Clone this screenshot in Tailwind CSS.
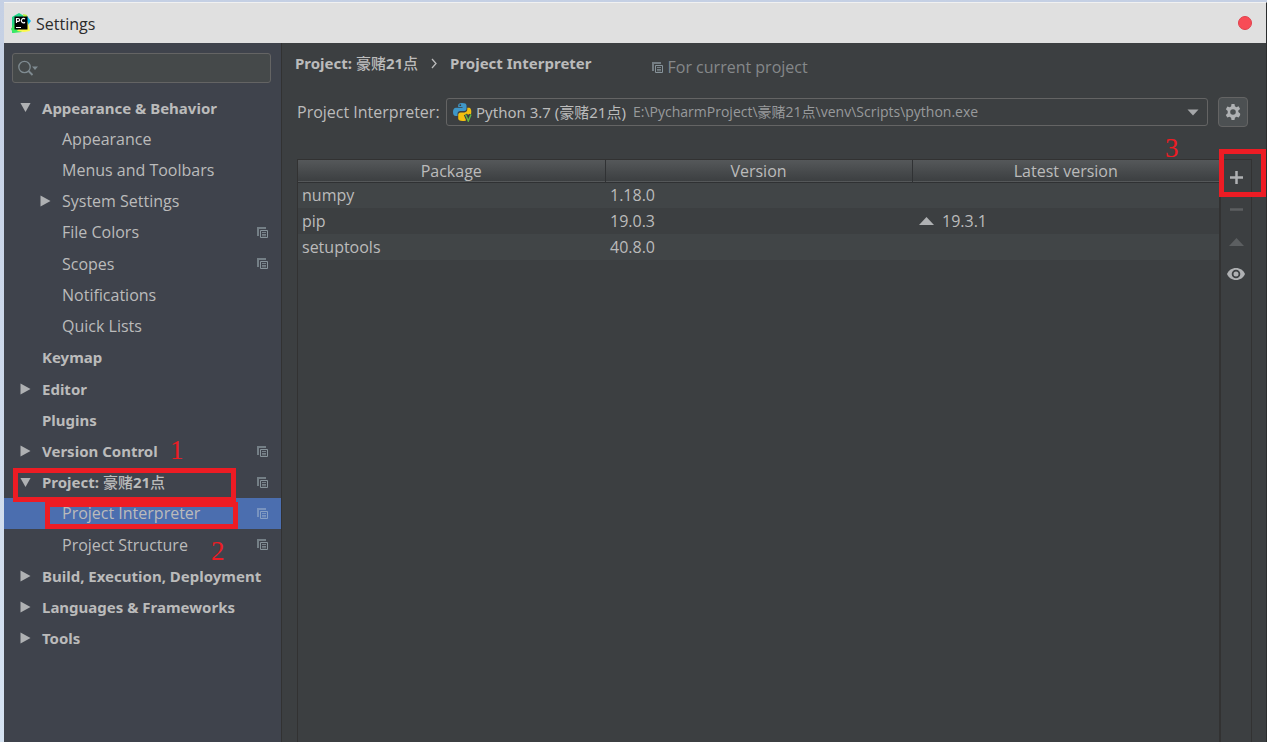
<!DOCTYPE html>
<html lang="en">
<head>
<meta charset="utf-8">
<meta name="viewport" content="width=device-width, initial-scale=1">
<title>Settings</title>
<script src="https://cdn.jsdelivr.net/npm/@tailwindcss/browser@4"></script>
</head>
<body class="flex min-h-screen flex-col bg-gradient-to-b from-[#c5d0e4] to-[#d6e3f2] pt-[2px] pl-1 font-['Open_Sans','Noto_Sans_CJK_SC',sans-serif] text-[16px] leading-5 text-[#bbbbbb]">

<svg class="hidden" aria-hidden="true">
  <symbol id="copy" viewBox="0 0 11 11">
    <path d="M0 0h9v2H2v7H0z" fill="currentColor" opacity=".75"/>
    <path d="M3.5 3.5h7v7h-7z" fill="none" stroke="currentColor"/>
    <path d="M5 5.5h4M5 7.5h4M5 8.8h4" stroke="currentColor" stroke-width=".8"/>
  </symbol>
  <symbol id="closed" viewBox="0 0 11 12"><path d="M0.500 0.500 10.500 6 0.500 11.500z" fill="currentColor"/></symbol>
  <symbol id="open" viewBox="0 0 12 11"><path d="M0.500 0.500h11L6 10.500z" fill="currentColor"/></symbol>
</svg>

<header class="flex h-[41px] shrink-0 items-center border-t border-r border-t-[#f1f1f1] border-r-[#2b2d2e] bg-[#e0e0e0] pr-[14px] pl-[7px] text-[#2b2b2b]">
  <svg class="mr-[5px] h-5 w-5" viewBox="0 0 20 20" aria-hidden="true">
    <path d="M1 4 8 0l5 3 1 14-4 1-9 2z" fill="#21d789"/>
    <path d="M0 16 4 9l7 10-9 1z" fill="#3bea62"/>
    <path d="M12 1l4 1 1 4-4 1z" fill="#b8ee3c"/>
    <path d="M16 3l4 5-3 4-3-6z" fill="#07c3f2"/>
    <path d="M15 6l2 4 2 8-6 1-7-1 3-4z" fill="#fcf84a"/>
    <path d="M3.500 3.500h13v13h-13z" fill="#000"/>
    <path d="M5.500 10V5.500h1.700a1.400 1.400 0 0 1 0 2.800H5.500M14 6a2.200 2.200 0 1 0 0 3.300M5 14.500h5" fill="none" stroke="#fff" stroke-width="1.200"/>
  </svg>
  <h1 class="grow pt-[2px]">Settings</h1>
  <button type="button" aria-label="Close" class="h-[14px] w-[14px] rounded-full border border-[#e0414c] bg-[#f84c56]"></button>
</header>

<div class="flex grow border-r border-[#2b2d2e] bg-[#3c3f41]">
  <aside class="w-[278px] shrink-0 border-r border-[#323232] bg-[#3f434c] pt-[10px]">
    <label class="mr-[10px] ml-2 flex h-[30px] items-center rounded-[3px] border border-[#646464] bg-[#45494a] pl-[5px] text-[#7f8b91]">
      <svg class="h-4 w-5" viewBox="0 0 20 16" fill="none" aria-hidden="true">
        <circle cx="6.500" cy="7" r="5.700" stroke="currentColor" stroke-width="1.300"/>
        <path d="m10.500 11 4 4" stroke="currentColor" stroke-width="1.800"/>
        <path d="M14 6.500h6l-3 3.500z" fill="currentColor"/>
      </svg>
      <input type="search" aria-label="Search settings" class="min-w-0 grow bg-transparent px-1 text-[#bbbbbb] outline-none">
    </label>

    <nav aria-label="Settings categories" class="mt-[9px]">
      <ul class="flex h-[562px] flex-col">
        <li class="flex flex-1 items-center pr-[13px] pl-4"><svg class="mr-[11px] h-[11px] w-[11px] text-[#afb1b3]"><use href="#open"/></svg><a href="#" class="font-['Noto_Sans','Noto_Sans_CJK_SC',sans-serif] text-[15px] font-bold">Appearance &amp; Behavior</a></li>
        <li class="flex flex-1 items-center pr-[13px] pl-[58px]"><a href="#">Appearance</a></li>
        <li class="flex flex-1 items-center pr-[13px] pl-[58px]"><a href="#">Menus and Toolbars</a></li>
        <li class="flex flex-1 items-center pr-[13px] pl-9"><svg class="mr-[11px] h-3 w-[11px] text-[#afb1b3]"><use href="#closed"/></svg><a href="#">System Settings</a></li>
        <li class="flex flex-1 items-center pr-[13px] pl-[58px]"><a href="#" class="grow">File Colors</a><svg class="h-[11px] w-[11px] text-[#87939a]"><use href="#copy"/></svg></li>
        <li class="flex flex-1 items-center pr-[13px] pl-[58px]"><a href="#" class="grow">Scopes</a><svg class="h-[11px] w-[11px] text-[#87939a]"><use href="#copy"/></svg></li>
        <li class="flex flex-1 items-center pr-[13px] pl-[58px]"><a href="#">Notifications</a></li>
        <li class="flex flex-1 items-center pr-[13px] pl-[58px]"><a href="#">Quick Lists</a></li>
        <li class="flex flex-1 items-center pr-[13px] pl-[38px]"><a href="#" class="font-['Noto_Sans','Noto_Sans_CJK_SC',sans-serif] text-[15px] font-bold">Keymap</a></li>
        <li class="flex flex-1 items-center pr-[13px] pl-4"><svg class="mr-[11px] h-3 w-[11px] text-[#afb1b3]"><use href="#closed"/></svg><a href="#" class="font-['Noto_Sans','Noto_Sans_CJK_SC',sans-serif] text-[15px] font-bold">Editor</a></li>
        <li class="flex flex-1 items-center pr-[13px] pl-[38px]"><a href="#" class="font-['Noto_Sans','Noto_Sans_CJK_SC',sans-serif] text-[15px] font-bold">Plugins</a></li>
        <li class="relative flex flex-1 items-center pr-[13px] pl-4"><svg class="mr-[11px] h-3 w-[11px] text-[#afb1b3]"><use href="#closed"/></svg><a href="#" class="grow font-['Noto_Sans','Noto_Sans_CJK_SC',sans-serif] text-[15px] font-bold">Version Control</a><svg class="h-[11px] w-[11px] text-[#87939a]"><use href="#copy"/></svg>
          <span class="absolute top-px left-[166px] font-['Liberation_Serif',serif] text-[27px] leading-7 text-[#ed1c24]">1</span></li>
        <li class="relative flex flex-1 items-center pr-[13px] pl-4"><svg class="mr-[11px] h-[11px] w-[11px] text-[#afb1b3]"><use href="#open"/></svg><a href="#" class="grow font-['Noto_Sans','Noto_Sans_CJK_SC',sans-serif] text-[15px] font-bold">Project: <span class="font-medium">豪赌</span>21<span class="font-medium">点</span></a><svg class="h-[11px] w-[11px] text-[#87939a]"><use href="#copy"/></svg>
          <span class="absolute top-px left-[9px] z-10 h-[34px] w-[223px] border-5 border-[#ed1c24]"></span></li>
        <li class="relative flex flex-1 items-center bg-[#4b6eaf] pr-[13px] pl-[58px]"><a href="#" aria-current="page" class="grow">Project Interpreter</a><svg class="h-[11px] w-[11px] text-[#87a0c4]"><use href="#copy"/></svg>
          <span class="absolute top-1 left-[41px] h-[27px] w-[193px] border-5 border-[#ed1c24]"></span></li>
        <li class="relative flex flex-1 items-center pr-[13px] pl-[58px]"><a href="#" class="grow">Project Structure</a><svg class="h-[11px] w-[11px] text-[#87939a]"><use href="#copy"/></svg>
          <span class="absolute top-2 left-[207px] font-['Liberation_Serif',serif] text-[27px] leading-7 text-[#ed1c24]">2</span></li>
        <li class="flex flex-1 items-center pr-[13px] pl-4"><svg class="mr-[11px] h-3 w-[11px] shrink-0 text-[#afb1b3]"><use href="#closed"/></svg><a href="#" class="font-['Noto_Sans','Noto_Sans_CJK_SC',sans-serif] text-[15px] font-bold whitespace-nowrap">Build, Execution, Deployment</a></li>
        <li class="flex flex-1 items-center pr-[13px] pl-4"><svg class="mr-[11px] h-3 w-[11px] text-[#afb1b3]"><use href="#closed"/></svg><a href="#" class="font-['Noto_Sans','Noto_Sans_CJK_SC',sans-serif] text-[15px] font-bold">Languages &amp; Frameworks</a></li>
        <li class="flex flex-1 items-center pr-[13px] pl-4"><svg class="mr-[11px] h-3 w-[11px] text-[#afb1b3]"><use href="#closed"/></svg><a href="#" class="font-['Noto_Sans','Noto_Sans_CJK_SC',sans-serif] text-[15px] font-bold">Tools</a></li>
      </ul>
    </nav>
  </aside>

  <main class="flex min-w-0 grow flex-col">
    <div class="flex pt-[10px] pl-[13px]">
      <h2 class="flex font-['Noto_Sans','Noto_Sans_CJK_SC',sans-serif] text-[15px] font-bold"><span>Project: <span class="font-medium">豪赌</span>21<span class="font-medium">点</span></span>
        <svg class="mx-[13px] mt-[5px] h-[11px] w-[6px]" viewBox="0 0 6 11" fill="none" stroke="currentColor" stroke-width="1.300" aria-hidden="true"><path d="m1 1 4 4.500L1 10"/></svg>
        <span>Project Interpreter</span></h2>
      <p class="mt-1 ml-[60px] flex items-center text-[#85888a]"><svg class="mr-[5px] h-[11px] w-[11px] text-[#87939a]"><use href="#copy"/></svg>For current project</p>
    </div>

    <div class="mt-5 flex items-center pr-[18px] pl-[15px]">
      <label for="interpreter" class="w-[149px] shrink-0">Project Interpreter:</label>
      <div class="flex h-7 min-w-0 grow items-center rounded-[3px] border border-[#646464] pr-2 pl-[6px]">
        <svg class="mr-1 h-5 w-[19px] shrink-0" viewBox="0 0 19 20" aria-hidden="true">
          <path d="M9 1C6 1 5.200 2 5.200 3.500V5H9.500v.800H3C1 5.800 0 7.500 0 10s1 4 2.800 4H4.500v-2.200c0-1.600 1.200-2.800 2.800-2.800h3.900c1.300 0 2.300-1 2.300-2.300V3.500C13.500 1.800 12 1 9 1z" fill="#3f97c8"/>
          <path d="M14.300 5.800H16c1.600 0 2.300 1.700 2.300 4.200 0 1-.2 2-.6 2.600h-3.500L13 11.500v7c-1 .4-2.200.5-3.500.5-3 0-4.300-.9-4.300-2.500v-3.800c0-1.300 1-2.300 2.300-2.300h4c1.600 0 2.800-1.200 2.800-2.800z" fill="#f2bf10"/>
          <circle cx="7.300" cy="3.200" r=".9" fill="#3c3f41"/>
          <path d="m12.500 12.500 2.800 6.500 2.700-6.500" fill="none" stroke="#3c3f41" stroke-width="3.500"/>
          <path d="m12.500 12.500 2.800 6.500 2.700-6.500" fill="none" stroke="#62b543" stroke-width="1.500"/>
        </svg>
        <select id="interpreter" class="shrink-0 appearance-none bg-transparent font-['Noto_Sans','Noto_Sans_CJK_SC',sans-serif] text-[15px] outline-none"><option>Python 3.7 (豪赌21点)</option></select>
        <span class="ml-[7px] min-w-0 grow truncate text-[14px] text-[#989a9c]">E:\PycharmProject\豪赌21点\venv\Scripts\python.exe</span>
        <svg class="h-[7px] w-3 shrink-0" viewBox="0 0 12 7" aria-hidden="true"><path d="M.500.500h11L6 6.500z" fill="#a5a7a9"/></svg>
      </div>
      <button type="button" aria-label="Interpreter options" class="ml-[10px] flex h-[30px] w-[30px] shrink-0 items-center justify-center rounded-[4px] border border-[#646464] bg-[#4c5052]">
        <svg class="h-4 w-4" viewBox="0 0 16 16" aria-hidden="true"><path fill="#afb1b3" fill-rule="evenodd" d="M6.500 0h3l.4 2.300 1.500.9 2.200-.9 1.500 2.600-1.800 1.500v1.700L15.100 9.600l.1 1.400-1.500 2.600-2.300-.8-1.500.9L9.500 16h-3l-.4-2.300-1.500-.9-2.300.8L.800 11l1.900-1.800V7L.900 5.200l1.500-2.600 2.200.7 1.500-.9zM8 5.200a2.800 2.800 0 1 0 0 5.600 2.800 2.800 0 0 0 0-5.600z"/></svg>
      </button>
    </div>

    <div class="mt-8 flex grow pr-[14px] pl-[15px]">
      <div class="min-w-0 grow border-t border-r-2 border-l border-[#323232]">
        <table class="w-full table-fixed border-collapse text-left">
          <thead>
            <tr class="h-[22px] border-b border-[#2f3133] bg-gradient-to-b from-[#55585a] to-[#3c3f41]">
              <th class="border-r border-[#303234] p-0 text-center font-normal">Package</th>
              <th class="border-r border-[#303234] p-0 text-center font-normal">Version</th>
              <th class="p-0 text-center font-normal">Latest version</th>
            </tr>
          </thead>
          <tbody>
            <tr class="h-[26px] bg-[#414547]"><td class="p-0 pl-1">numpy</td><td class="p-0 pl-[5px]">1.18.0</td><td></td></tr>
            <tr class="h-[26px]"><td class="p-0 pl-1">pip</td><td class="p-0 pl-[5px]">19.0.3</td><td class="p-0 pl-[7px]"><span class="flex items-center gap-2"><svg class="h-2 w-[15px]" viewBox="0 0 15 8" aria-label="Upgrade available"><path d="M0 8 7.500 0 15 8z" fill="#afb1b3"/></svg>19.3.1</span></td></tr>
            <tr class="h-[26px] bg-[#414547]"><td class="p-0 pl-1">setuptools</td><td class="p-0 pl-[5px]">40.8.0</td><td></td></tr>
          </tbody>
        </table>
      </div>
      <div role="toolbar" aria-label="Package actions" class="relative flex w-[31px] shrink-0 flex-col items-center border-t border-r border-[#323232] pt-px">
        <button type="button" aria-label="Install" class="flex h-8 w-[30px] items-center justify-center"><svg class="h-[13px] w-[13px]" viewBox="0 0 13 13"><path d="M6.500 0v13M0 6.500h13" stroke="#afb1b3" stroke-width="2.500"/></svg></button>
        <button type="button" aria-label="Uninstall" disabled class="flex h-8 w-[30px] items-center justify-center"><svg class="h-[13px] w-[13px]" viewBox="0 0 13 13"><path d="M0 6.500h13" stroke="#5c5f61" stroke-width="2.500"/></svg></button>
        <button type="button" aria-label="Upgrade" disabled class="flex h-[33px] w-[30px] items-center justify-center"><svg class="h-2 w-[15px]" viewBox="0 0 15 8"><path d="M0 8 7.500 0 15 8z" fill="#5c5f61"/></svg></button>
        <button type="button" aria-label="Show early releases" class="flex h-8 w-[30px] items-center justify-center"><svg class="h-3 w-[18px]" viewBox="0 0 18 12"><path d="M0 6C1.500 2.200 5 0 9 0s7.500 2.200 9 6c-1.500 3.800-5 6-9 6S1.500 9.800 0 6z" fill="#afb1b3"/><circle cx="9" cy="6" r="3.400" fill="none" stroke="#3c3f41" stroke-width="1.800"/></svg></button>
        <span class="absolute -top-[11px] -left-[2px] h-12 w-[47px] border-5 border-[#ed1c24]"></span>
        <span class="absolute -top-[26px] -left-[56px] font-['Liberation_Serif',serif] text-[27px] leading-7 text-[#ed1c24]">3</span>
      </div>
    </div>
  </main>
</div>
</body>
</html>
